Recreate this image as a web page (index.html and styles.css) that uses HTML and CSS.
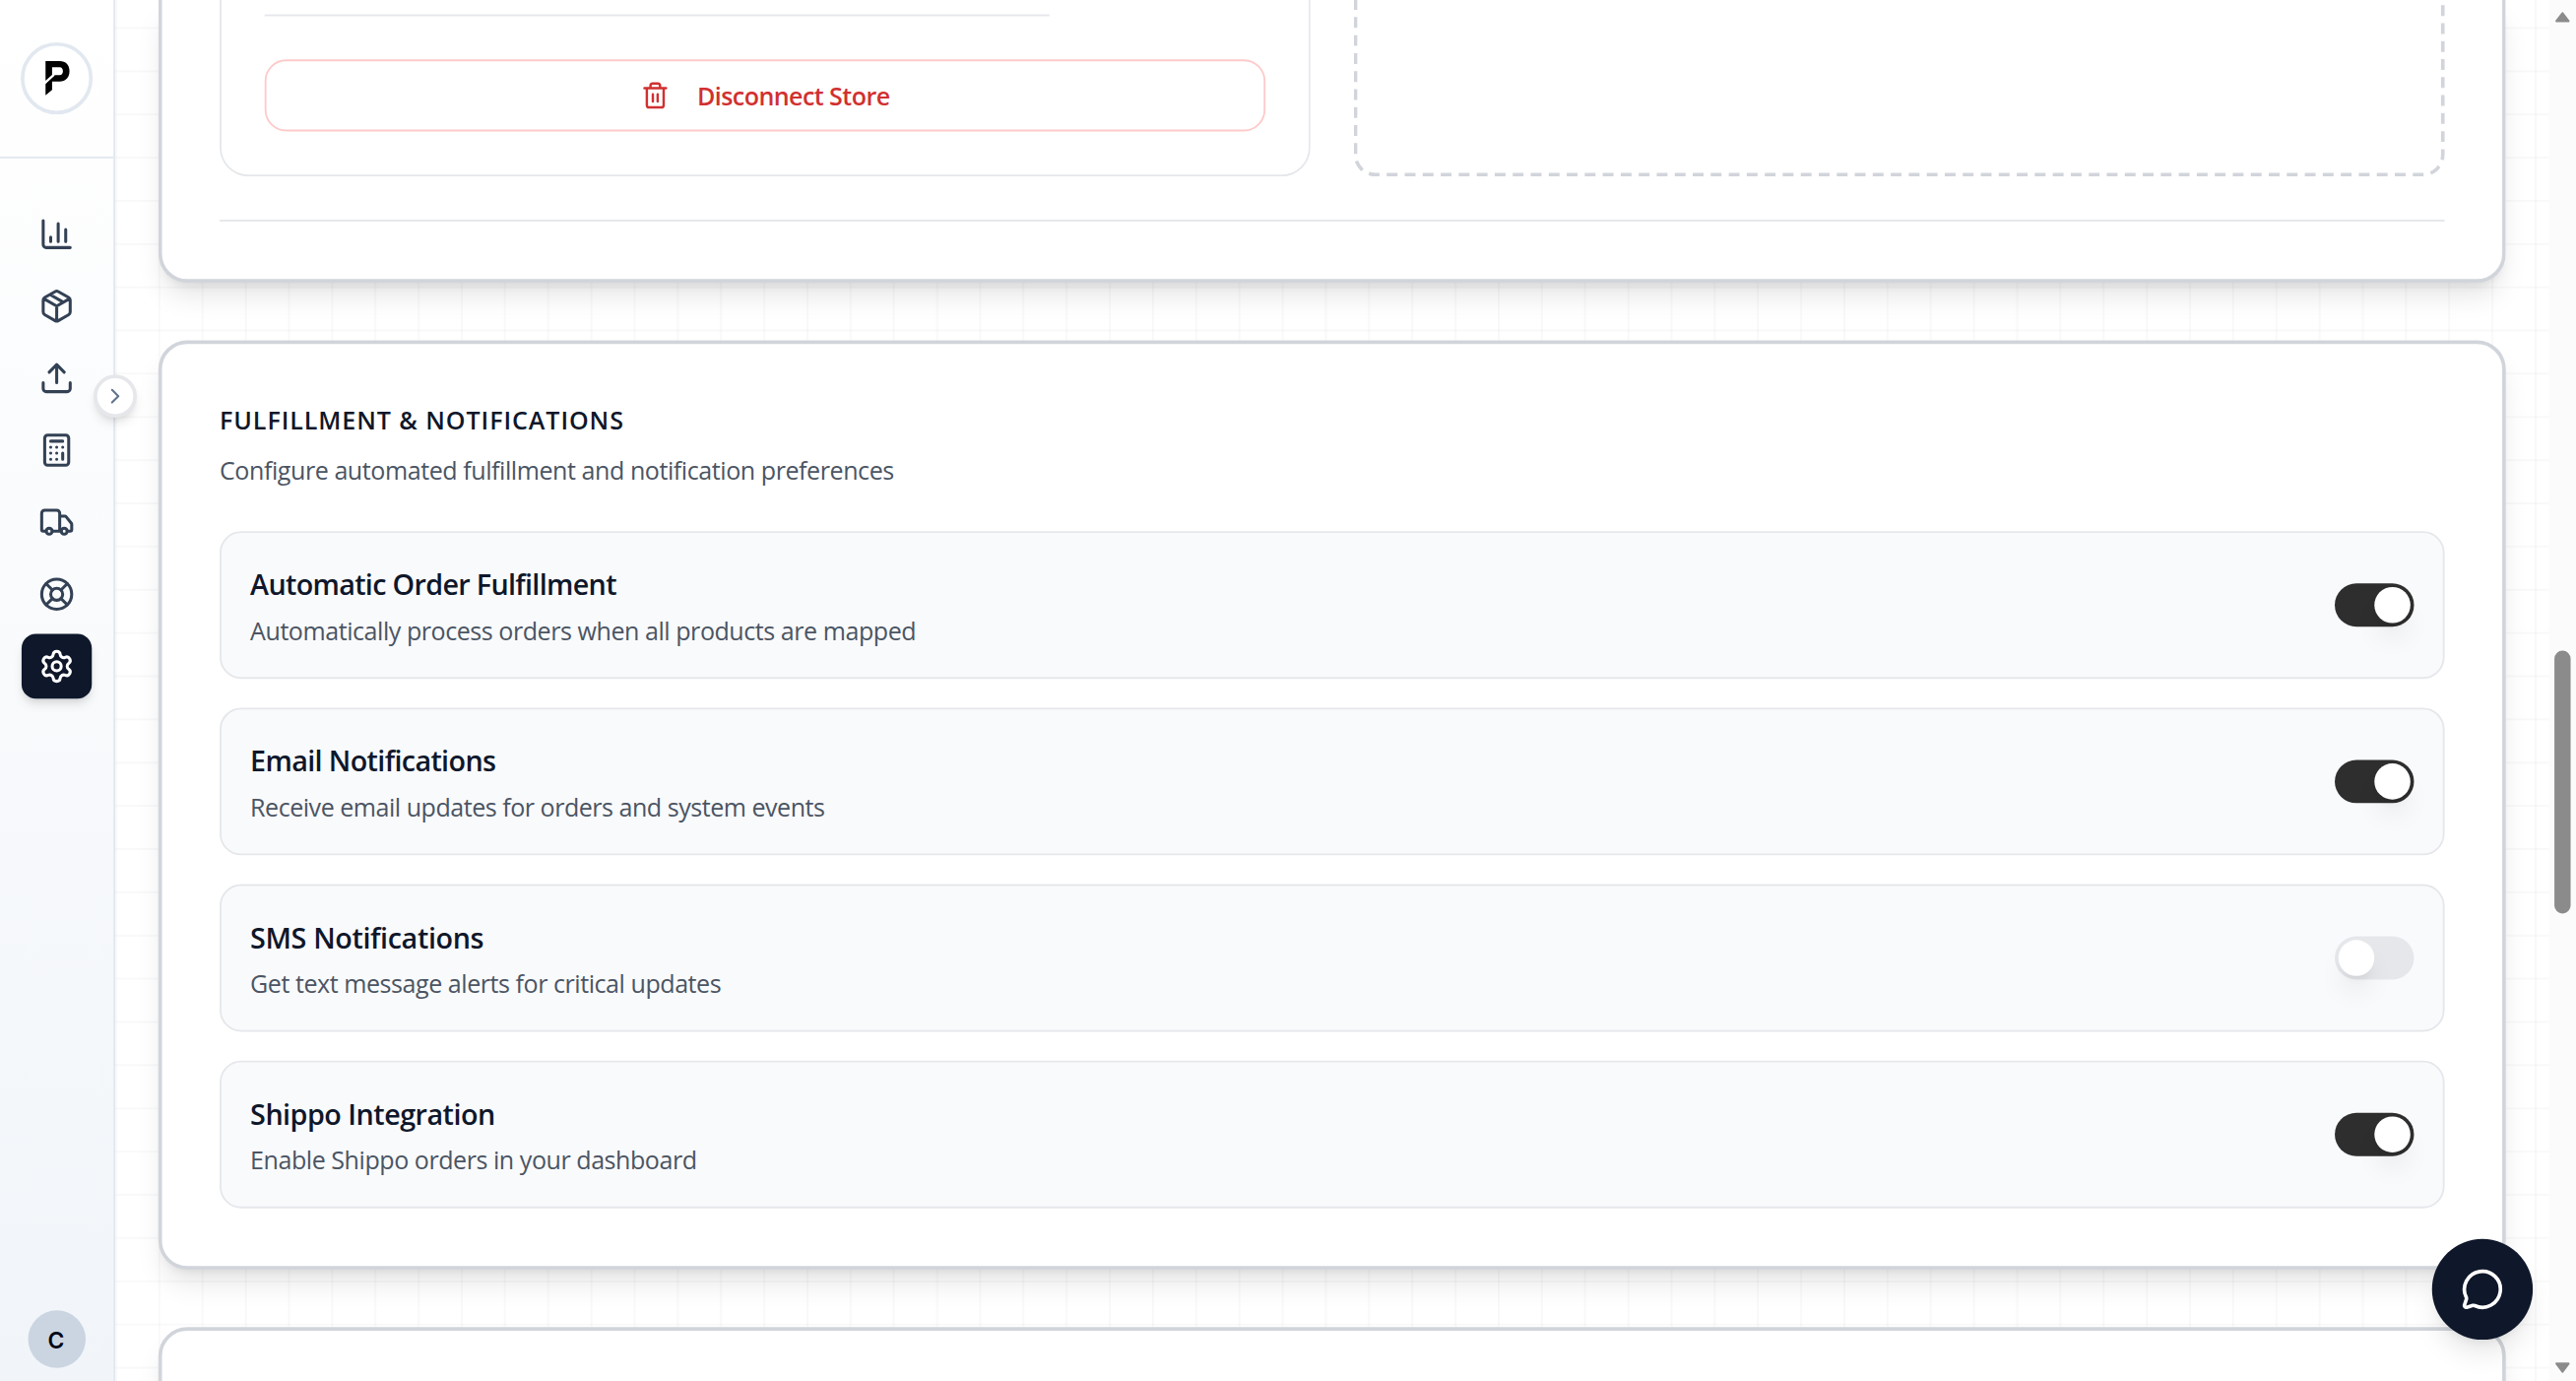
FILE: index.html
```html
<!DOCTYPE html>
<html lang="en">
<head>
<meta charset="utf-8">
<title>Settings</title>
<link rel="stylesheet" href="styles.css">
</head>
<body>
<div class="app">
  <aside class="sidebar">
    <div class="sidebar-header">
      <div class="logo">
        <svg viewBox="0 0 73 104"><path d="M0 0H43C62 0 73 12 73 30.500C73 49 62 62 43 62H20V88L0 104V70L28 43H43C50 43 53 38 53 31C53 24 50 19 43 19H20V42L0 60Z"/><path class="logo-cut" d="M-2 66L26 42"/></svg>
      </div>
    </div>
    <nav class="nav">
      <a class="nav-item"><svg class="icon" viewBox="0 0 24 24"><path d="M3 3v16a2 2 0 0 0 2 2h16M18 17V9M13 17V5M8 17v-3"/></svg></a>
      <a class="nav-item"><svg class="icon" viewBox="0 0 24 24"><path d="M11 21.730a2 2 0 0 0 2 0l7-4A2 2 0 0 0 21 16V8a2 2 0 0 0-1-1.730l-7-4a2 2 0 0 0-2 0l-7 4A2 2 0 0 0 3 8v8a2 2 0 0 0 1 1.730zM12 22V12M3.290 7 12 12l8.710-5M7.500 4.270l9 5.150"/></svg></a>
      <a class="nav-item"><svg class="icon" viewBox="0 0 24 24"><path d="M12 3v12M17 8l-5-5-5 5M21 15v4a2 2 0 0 1-2 2H5a2 2 0 0 1-2-2v-4"/></svg></a>
      <a class="nav-item"><svg class="icon" viewBox="0 0 24 24"><rect x="4" y="2" width="16" height="20" rx="2"/><path d="M8 6h8M16 14v4M16 10h.01M12 10h.01M8 10h.01M12 14h.01M8 14h.01M12 18h.01M8 18h.01"/></svg></a>
      <a class="nav-item"><svg class="icon" viewBox="0 0 24 24"><path d="M14 18V6a2 2 0 0 0-2-2H4a2 2 0 0 0-2 2v11a1 1 0 0 0 1 1h2M15 18H9M19 18h2a1 1 0 0 0 1-1v-3.650a1 1 0 0 0-.22-.624l-3.480-4.350A1 1 0 0 0 17.520 8H14"/><circle cx="17" cy="18" r="2"/><circle cx="7" cy="18" r="2"/></svg></a>
      <a class="nav-item"><svg class="icon" viewBox="0 0 24 24"><circle cx="12" cy="12" r="10"/><path d="m4.930 4.930 4.240 4.240M14.830 9.170l4.240-4.240M14.830 14.830l4.240 4.240M9.170 14.830l-4.240 4.240"/><circle cx="12" cy="12" r="4"/></svg></a>
      <a class="nav-item active"><svg class="icon" viewBox="0 0 24 24"><path d="M9.671 4.136a2.340 2.340 0 0 1 4.659 0 2.340 2.340 0 0 0 3.319 1.915 2.340 2.340 0 0 1 2.330 4.033 2.340 2.340 0 0 0 0 3.831 2.340 2.340 0 0 1-2.330 4.033 2.340 2.340 0 0 0-3.319 1.915 2.340 2.340 0 0 1-4.659 0 2.340 2.340 0 0 0-3.320-1.915 2.340 2.340 0 0 1-2.330-4.033 2.340 2.340 0 0 0 0-3.831A2.340 2.340 0 0 1 6.350 6.051a2.340 2.340 0 0 0 3.319-1.915"/><circle cx="12" cy="12" r="3"/></svg></a>
    </nav>
    <div class="sidebar-footer"><div class="avatar">C</div></div>
    <button class="expand"><svg class="icon" viewBox="0 0 24 24"><path d="m9 18 6-6-6-6"/></svg></button>
  </aside>

  <main class="main">
    <section class="card card-stores">
      <div class="stores">
        <div class="store">
          <div class="store-rule"></div>
          <button class="disconnect"><svg class="icon" viewBox="0 0 24 24"><path d="M3 6h18M19 6v14a2 2 0 0 1-2 2H7a2 2 0 0 1-2-2V6M8 6V4a2 2 0 0 1 2-2h4a2 2 0 0 1 2 2v2M10 11v6M14 11v6"/></svg><span>Disconnect Store</span></button>
        </div>
        <div class="store-empty"></div>
      </div>
      <div class="rule"></div>
    </section>

    <section class="card">
      <h2 class="card-title">FULFILLMENT &amp; NOTIFICATIONS</h2>
      <p class="text card-sub">Configure automated fulfillment and notification preferences</p>
      <div class="settings">
        <div class="setting">
          <div><h3 class="setting-title">Automatic Order Fulfillment</h3><p class="text">Automatically process orders when all products are mapped</p></div>
          <div class="switch on"><span class="knob"></span></div>
        </div>
        <div class="setting">
          <div><h3 class="setting-title">Email Notifications</h3><p class="text">Receive email updates for orders and system events</p></div>
          <div class="switch on"><span class="knob"></span></div>
        </div>
        <div class="setting">
          <div><h3 class="setting-title">SMS Notifications</h3><p class="text">Get text message alerts for critical updates</p></div>
          <div class="switch"><span class="knob"></span></div>
        </div>
        <div class="setting">
          <div><h3 class="setting-title">Shippo Integration</h3><p class="text">Enable Shippo orders in your dashboard</p></div>
          <div class="switch on"><span class="knob"></span></div>
        </div>
      </div>
    </section>

    <section class="card card-next"></section>
  </main>

  <div class="scrollbar">
    <svg class="arrow" viewBox="0 0 8 6"><path d="M4 1 7 5H1Z"/></svg>
    <div class="thumb"></div>
    <svg class="arrow" viewBox="0 0 8 6"><path d="M4 5 7 1H1Z"/></svg>
  </div>

  <button class="chat"><svg class="icon" viewBox="0 0 24 24"><path d="M2.992 16.342a2 2 0 0 1 .094 1.167l-1.065 3.290a1 1 0 0 0 1.236 1.168l3.413-.998a2 2 0 0 1 1.099.092 10 10 0 1 0-4.777-4.719"/></svg></button>
</div>
</body>
</html>
```
FILE: styles.css
```css
* { box-sizing: border-box; margin: 0; padding: 0; }
html, body { width: 100%; height: 100%; overflow: hidden; background: #fff; }
body { font-family: "Segoe UI", "Open Sans", sans-serif; color: #0f172a; }
button { font: inherit; background: none; border: 0; }

/* 1431x767 layout, scaled up to fill the window */
.app {
  position: relative;
  display: flex;
  width: 1431px;
  height: 767px;
  overflow: hidden;
  transform: scale(1.8281);
  transform-origin: 0 0;
}

.icon {
  display: block;
  width: 20px;
  height: 20px;
  fill: none;
  stroke: currentColor;
  stroke-width: 2;
  stroke-linecap: round;
  stroke-linejoin: round;
}

/* Sidebar */
.sidebar {
  position: relative;
  z-index: 2;
  display: flex;
  flex-direction: column;
  flex: none;
  width: 64px;
  border-right: 1px solid #e2e8f0;
  background: linear-gradient(to bottom, #fff, #f8fafc 50%, #f1f5f9);
}
.sidebar-header {
  display: flex;
  align-items: center;
  justify-content: center;
  height: 88px;
  border-bottom: 1px solid #e2e8f0;
}
.logo {
  display: flex;
  align-items: center;
  justify-content: center;
  width: 40px;
  height: 40px;
  border: 2px solid #e2e8f0;
  border-radius: 50%;
  background: #fff;
  transform: translate(-.5px, -.5px);
}
.logo svg { width: 13.3px; height: 19px; overflow: visible; transform: translate(.8px, .4px); }
.logo-cut { stroke: #fff; stroke-width: 5; }

.nav {
  display: flex;
  flex-direction: column;
  gap: 4px;
  flex: 1;
  padding: 24px 12px;
}
.nav-item {
  display: flex;
  align-items: center;
  justify-content: center;
  height: 36px;
  border-radius: 8px;
  color: #334155;
}
.nav-item .icon { transform: translateX(-.5px); }
.nav-item.active {
  background: #0f172a;
  color: #fff;
  box-shadow: 0 4px 6px -1px rgba(0, 0, 0, .1), 0 2px 4px -2px rgba(0, 0, 0, .1);
}
.sidebar-footer { display: flex; justify-content: center; padding-bottom: 7px; }
.avatar {
  display: flex;
  align-items: center;
  justify-content: center;
  width: 32px;
  height: 32px;
  border-radius: 50%;
  background: #cbd5e1;
  font: 600 12.5px Inter, sans-serif;
  color: #020617;
  transform: translate(-.4px, -.3px);
}
.expand {
  position: absolute;
  top: 208px;
  right: -13px;
  display: flex;
  align-items: center;
  justify-content: center;
  width: 24px;
  height: 24px;
  border: 2px solid #e5e7eb;
  border-radius: 50%;
  background: #fff;
  color: #64748b;
  box-shadow: 0 4px 6px -1px rgba(0, 0, 0, .1), 0 2px 4px -2px rgba(0, 0, 0, .1);
}
.expand .icon { width: 14px; height: 14px; flex: none; }

/* Content */
.main {
  display: flex;
  flex-direction: column;
  gap: 32px;
  flex: 1;
  padding: 0 24px;
  overflow: hidden;
  background-color: #fff;
  background-image:
    linear-gradient(to right, rgba(0, 0, 0, .025) 1px, transparent 1px),
    linear-gradient(to bottom, rgba(0, 0, 0, .025) 1px, transparent 1px);
  background-size: 24px 24px;
  background-position: 0 15px;
}
.card {
  flex: none;
  padding: 32px;
  border: 2px solid #d1d5db;
  border-radius: 16px;
  background: #fff;
  box-shadow: 0 10px 15px -3px rgba(0, 0, 0, .1), 0 4px 6px -4px rgba(0, 0, 0, .1);
}
.card-stores { padding-top: 0; border-top: 0; border-radius: 0 0 16px 16px; }
.card-next { height: 160px; }

.stores { display: grid; grid-template-columns: 1fr 1fr; gap: 24px; height: 98px; }
.store {
  padding: 8px 24px 24px;
  border: 1px solid #e5e7eb;
  border-top: 0;
  border-radius: 0 0 16px 16px;
}
.store-rule { width: 436px; height: 1px; margin-bottom: 24px; background: #e5e7eb; }
.disconnect {
  display: flex;
  align-items: center;
  justify-content: center;
  gap: 15.5px;
  width: 100%;
  height: 40px;
  border: 1px solid #fecaca;
  border-radius: 12px;
  background: #fff;
  color: #d13030;
  font-size: 13.7px;
  font-weight: 600;
  letter-spacing: -.3px;
}
.disconnect span { transform: translateY(-.2px); }
.disconnect .icon { width: 16px; height: 16px; }
.store-empty {
  height: 138px;
  margin-top: -40px;
  border: 2px dashed #d1d5db;
  border-radius: 12px;
}
.rule { height: 1px; margin-top: 24px; background: #e5e7eb; }

.card-title {
  height: 20px;
  font-size: 13.7px;
  font-weight: 600;
  line-height: 20px;
  letter-spacing: .52px;
}
.text {
  height: 20px;
  font-size: 13.7px;
  line-height: 20px;
  letter-spacing: -.242px;
  color: #4b5563;
  white-space: nowrap;
}
.card-sub { margin-top: 8px; letter-spacing: -.232px; }
.card-title, .text, .setting-title { transform: translateY(.55px); }

.settings { display: flex; flex-direction: column; gap: 16px; margin-top: 24px; }
.setting {
  display: flex;
  align-items: center;
  justify-content: space-between;
  padding: 16px;
  border: 1px solid #e5e7eb;
  border-radius: 12px;
  background: #f9fafc;
}
.setting-title {
  height: 24px;
  margin-bottom: 4px;
  font-size: 15.7px;
  font-weight: 600;
  line-height: 24px;
  letter-spacing: -.36px;
}
.setting:nth-child(2) .setting-title { letter-spacing: -.34px; }
.setting:nth-child(2) .text { letter-spacing: -.256px; }
.setting:nth-child(3) .setting-title { letter-spacing: -.19px; }
.setting:nth-child(4) .setting-title { letter-spacing: -.27px; }

.switch {
  display: flex;
  width: 44px;
  height: 24px;
  padding: 2px;
  border-radius: 12px;
  background: #e5e7eb;
}
.switch.on { justify-content: flex-end; background: #2e2e2e; }
.knob {
  width: 20px;
  height: 20px;
  border-radius: 50%;
  background: #fff;
  box-shadow: 0 10px 15px -3px rgba(0, 0, 0, .1), 0 4px 6px -4px rgba(0, 0, 0, .1);
}

/* Scrollbar */
.scrollbar {
  display: flex;
  flex-direction: column;
  align-items: center;
  flex: none;
  width: 15px;
  padding: 6px 0 4px;
  background: #fbfbfb;
}
.arrow {
  width: 9px;
  height: 7px;
  fill: #8b8b8b;
  stroke: #8b8b8b;
  stroke-linejoin: round;
}
.thumb {
  width: 9px;
  height: 146px;
  margin: 348px 0 auto;
  border-radius: 5px;
  background: #8b8b8b;
  transform: translateY(.3px);
}

/* Chat launcher */
.chat {
  position: absolute;
  right: 24px;
  bottom: 23px;
  z-index: 3;
  display: flex;
  align-items: center;
  justify-content: center;
  width: 56px;
  height: 56px;
  border-radius: 50%;
  background: #0f172a;
  color: #fff;
  box-shadow: 0 10px 15px -3px rgba(0, 0, 0, .1), 0 4px 6px -4px rgba(0, 0, 0, .1);
}
.chat .icon { width: 24px; height: 24px; }
```
